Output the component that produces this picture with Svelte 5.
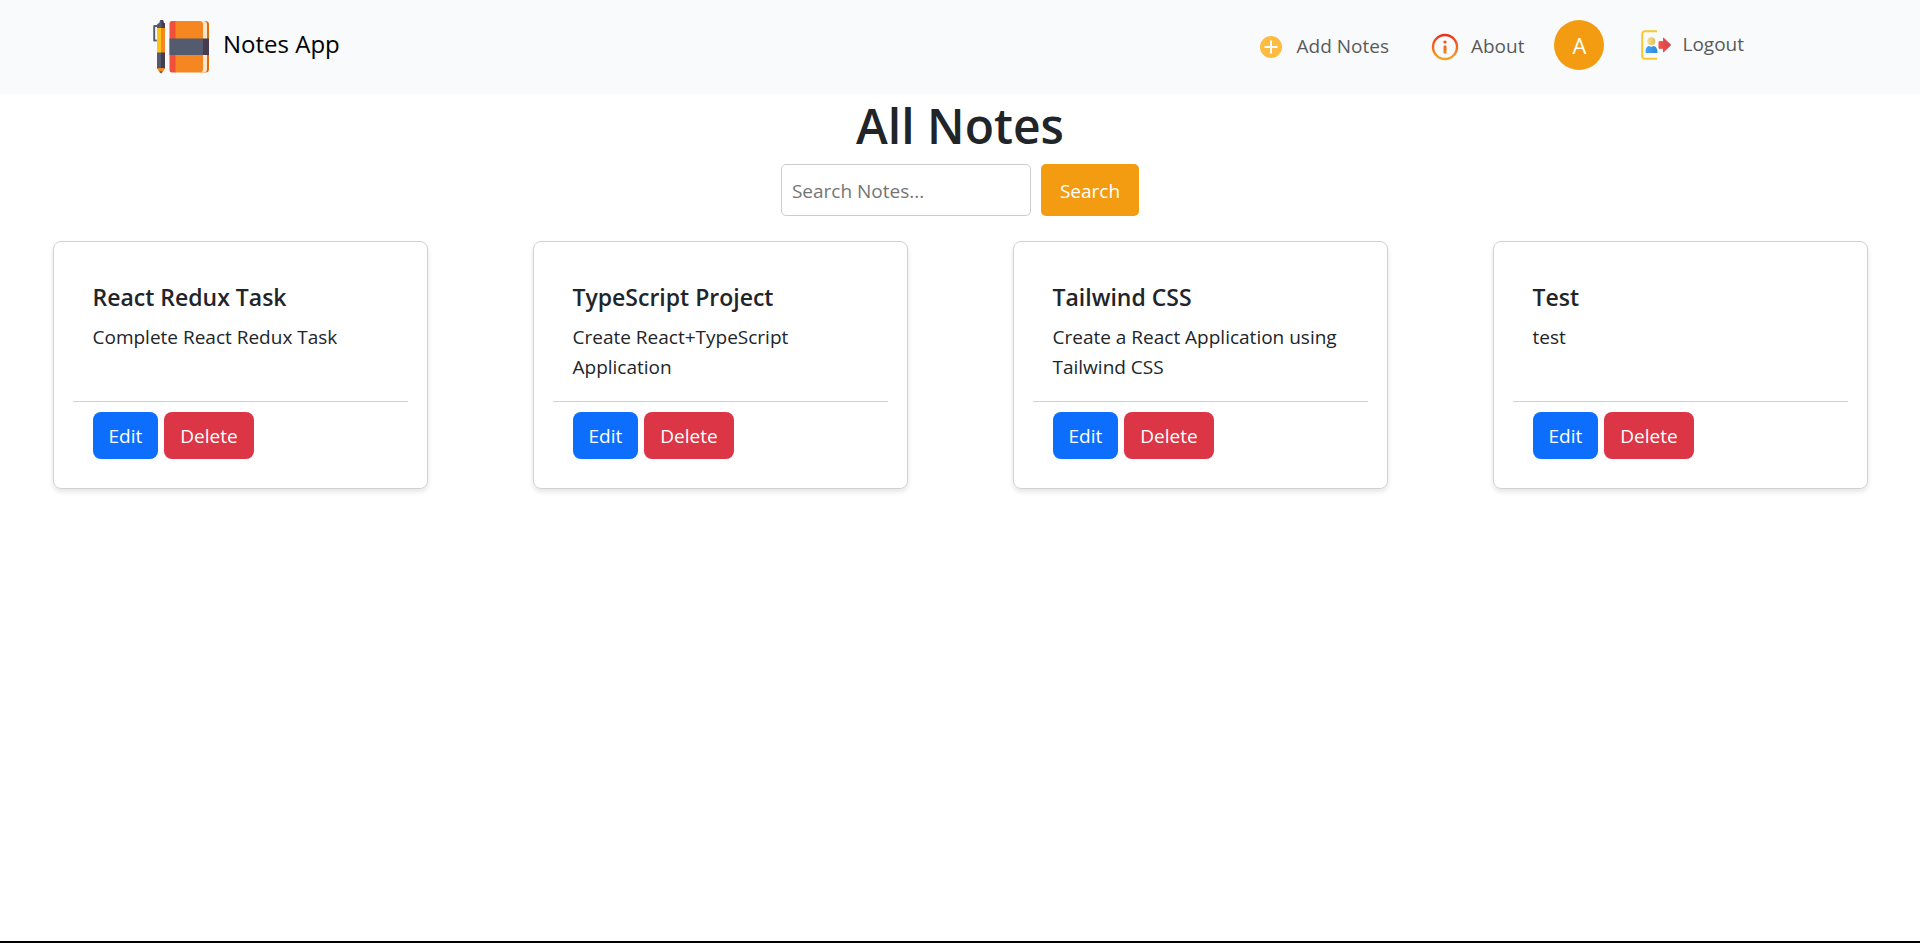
<script>
  let query = $state('');
  const notes = [
    { title: 'React Redux Task', body: 'Complete React Redux Task' },
    { title: 'TypeScript Project', body: 'Create React+TypeScript Application' },
    { title: 'Tailwind CSS', body: 'Create a React Application using Tailwind CSS' },
    { title: 'Test', body: 'test' }
  ];
</script>

<div class="page">
  <header class="navbar">
    <div class="container">
      <a class="brand" href="#home">
        <svg width="60" height="60" viewBox="0 -1 60 60" aria-hidden="true">
          <path d="M8 10H4.200V24.500H6" fill="none" stroke="#545b6e" stroke-width="1.900" stroke-linejoin="round" stroke-linecap="round" />
          <path d="M9.500 6.500 10 4h3l.600 2.500 1.400 1V13H7V8.500Z" fill="#545b6e" />
          <path d="M11.500 4H13l.600 2.500 1.400 1V13h-3.500Z" fill="#463c4b" />
          <path d="M7 12h4.500v26H7Z" fill="#fcc419" />
          <path d="M11 12h4v26h-4Z" fill="#f6861f" />
          <path d="M7 36.500h4.500V53H7Z" fill="#545b6e" />
          <path d="M11 36.500h4V53h-4Z" fill="#463c4b" />
          <path d="M7 52h8l-2.500 4.500h-3Z" fill="#f6861f" />
          <path d="M9.500 55.500h3L11 57.500Z" fill="#463c4b" />
          <path d="M50 5h5.500a3.500 3.500 0 0 1 3.500 3.500V53a3.500 3.500 0 0 1-3.500 3.500H50Z" fill="#db6b0b" />
          <path d="M50 5h3.500a3.500 3.500 0 0 1 3.500 3.500V53a3.500 3.500 0 0 1-3.500 3.500H50Z" fill="#fbe6cd" />
          <path d="M25 5h24.500a3.500 3.500 0 0 1 3.500 3.500V53a3.500 3.500 0 0 1-3.500 3.500H25Z" fill="#f6861f" />
          <path d="M22 5h3.500v51.500H22a2.500 2.500 0 0 1-2.500-2.500V7.500A2.500 2.500 0 0 1 22 5Z" fill="#f0503a" />
          <path d="M19.500 22.500H53V39H19.500Z" fill="#545b6e" />
          <path d="M53 22.500h6V39h-6Z" fill="#463c4b" />
        </svg>
        <span>Notes App</span>
      </a>
      <nav>
        <a class="link add" href="#add">
          <svg width="24" height="24" viewBox="0 0 24 24" aria-hidden="true">
            <circle cx="12" cy="12" r="11" fill="#fdbc40" />
            <path d="M12 6.200v11.600M6.200 12h11.600" stroke="#fff" stroke-width="2" stroke-linecap="round" />
          </svg>
          <span>Add Notes</span>
        </a>
        <a class="link about" href="#about">
          <svg width="28" height="28" viewBox="0 0 28 28" aria-hidden="true">
            <defs>
              <linearGradient id="heat" gradientUnits="userSpaceOnUse" x1="14" y1="1" x2="14" y2="27">
                <stop offset="0" stop-color="#ee2a1b" />
                <stop offset="1" stop-color="#f9a61f" />
              </linearGradient>
            </defs>
            <circle cx="14" cy="14" r="12" fill="none" stroke="url(#heat)" stroke-width="2.400" />
            <circle cx="14" cy="9" r="1.600" fill="url(#heat)" />
            <rect x="12.500" y="12.200" width="3" height="8.600" rx="1.500" fill="url(#heat)" />
          </svg>
          <span>About</span>
        </a>
        <span class="avatar">A</span>
        <a class="link logout" href="#logout">
          <svg width="30" height="30" viewBox="0 0 30 30" aria-hidden="true">
            <defs>
              <linearGradient id="skin" x1="0" x2="1"><stop offset="0" stop-color="#f7de8b" /><stop offset="1" stop-color="#e2bf5c" /></linearGradient>
              <linearGradient id="shirt" x1="0" x2="1"><stop offset="0" stop-color="#42a5f5" /><stop offset="1" stop-color="#2f8ad8" /></linearGradient>
              <linearGradient id="arrow" x1="0" x2="1"><stop offset="0" stop-color="#f5504e" /><stop offset="1" stop-color="#cf4747" /></linearGradient>
            </defs>
            <path d="M16 1.200H4A2.800 2.800 0 0 0 1.200 4v22A2.800 2.800 0 0 0 4 28.800h12" fill="none" stroke="#fcc72c" stroke-width="2" />
            <path d="M4.500 22c0-4 2-6 3.500-6 1 .900 3.500.900 4.500 0 1.600 0 4 2 4 6 0 .700-.500 1-1 1H5.500c-.600 0-1-.300-1-1Z" fill="url(#shirt)" />
            <circle cx="10.300" cy="11.200" r="4" fill="url(#skin)" />
            <path d="M18 11.700h4.500V8l7.200 7-7.200 7v-3.700H18Z" fill="url(#arrow)" stroke="url(#arrow)" stroke-linejoin="round" />
          </svg>
          <span>Logout</span>
        </a>
      </nav>
    </div>
  </header>

  <main>
    <h1>All Notes</h1>
    <form class="search" onsubmit={(e) => e.preventDefault()}>
      <input type="text" aria-label="Search notes" placeholder="Search Notes..." bind:value={query} />
      <button type="submit">Search</button>
    </form>
    <section class="notes">
      {#each notes as note}
        <article class="card">
          <div class="content">
            <h2>{note.title}</h2>
            <p>{note.body}</p>
          </div>
          <div class="actions">
            <button class="btn edit" type="button">Edit</button>
            <button class="btn delete" type="button">Delete</button>
          </div>
        </article>
      {/each}
    </section>
  </main>
</div>

<style>
  :global(body) {
    margin: 0;
    background: #fff;
  }
  .page,
  .page * {
    box-sizing: border-box;
  }
  .page {
    display: flex;
    flex-direction: column;
    min-height: 100vh;
    border-bottom: 2px solid #000;
    color: #212529;
    font: 400 19px/30px 'Open Sans', sans-serif;
  }
  .navbar {
    background: #f8fafc;
  }
  .container {
    display: flex;
    align-items: center;
    justify-content: space-between;
    max-width: 1650px;
    margin: 0 auto;
    padding: 15px 26px 19px 15px;
  }
  .brand {
    display: flex;
    align-items: center;
    gap: 13px;
    color: #000;
    font-size: 24px;
    text-decoration: none;
  }
  .brand span,
  .link span {
    padding-bottom: 2px;
  }
  nav {
    display: flex;
    align-items: center;
    padding-right: 15px;
  }
  .link {
    display: flex;
    align-items: center;
    color: #595a5b;
    text-decoration: none;
  }
  .add {
    gap: 14px;
    margin-right: 42px;
    padding-top: 3px;
  }
  .about {
    gap: 12px;
    margin-right: 30px;
    padding-top: 3px;
  }
  .avatar {
    display: grid;
    place-items: center;
    width: 50px;
    height: 50px;
    margin-right: 37px;
    border-radius: 50%;
    background: #f39c12;
    color: #fff;
    font-size: 22px;
  }
  .logout {
    gap: 11px;
  }
  h1 {
    margin: 0 0 8px;
    padding-top: 2px;
    font-size: 48px;
    font-weight: 600;
    line-height: 60px;
    text-align: center;
  }
  .search {
    display: flex;
    justify-content: center;
    gap: 10px;
    margin-bottom: 25px;
  }
  .search input {
    width: 250px;
    height: 52px;
    padding: 2px 10px 0;
    border: 1px solid #ccc;
    border-radius: 5px;
    font: inherit;
  }
  .search input::placeholder {
    color: #757575;
    opacity: 1;
  }
  .search button {
    height: 52px;
    padding: 2px 19px 0;
    border: 0;
    border-radius: 5px;
    background: #f39c12;
    color: #fff;
    font: inherit;
  }
  .notes {
    display: grid;
    grid-template-columns: repeat(4, 1fr);
    justify-items: center;
  }
  .card {
    display: flex;
    flex-direction: column;
    width: 375px;
    max-width: 100%;
    padding: 19px;
    border: 1px solid #d0d1d2;
    border-radius: 8px;
    box-shadow: 0 3px 5px rgba(0, 0, 0, 0.1);
  }
  .content {
    flex: 1;
    padding: 21px 20px 19px;
  }
  h2 {
    margin: 0 0 10px;
    font-size: 23px;
    font-weight: 600;
    line-height: 30px;
  }
  p {
    margin: 0;
  }
  .actions {
    display: flex;
    gap: 6px;
    padding: 10px 20px;
    border-top: 1px solid #d0d1d2;
  }
  .btn {
    height: 47px;
    padding: 0 16px;
    border: 0;
    border-radius: 8px;
    color: #fff;
    font: inherit;
  }
  .edit {
    background: #0d6efd;
  }
  .delete {
    background: #dc3545;
  }
</style>
